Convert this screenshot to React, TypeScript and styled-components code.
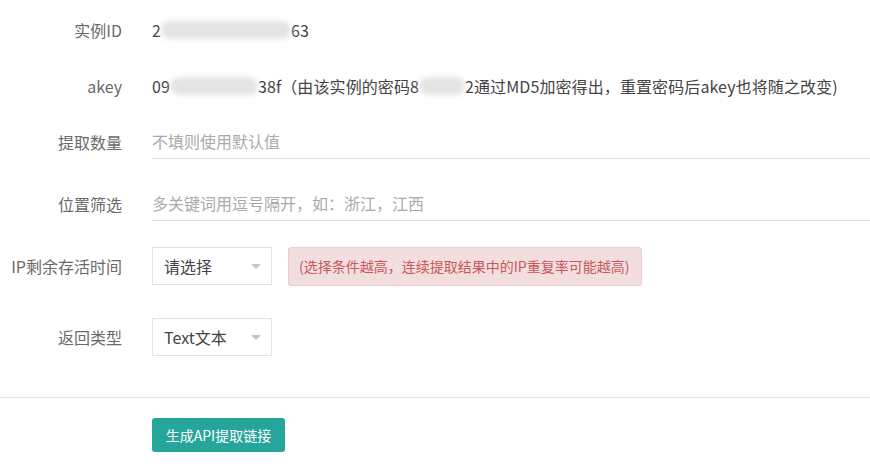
import styled, { createGlobalStyle } from "styled-components";

const GlobalStyle = createGlobalStyle`
  html, body {
    margin: 0;
    padding: 0;
    background: #fff;
  }
  body {
    font-family: "Noto Sans CJK SC", "Microsoft YaHei", sans-serif;
    color: #333;
  }
`;

const Page = styled.div`
  width: 870px;
  padding-top: 10px;
`;

const Form = styled.div`
  display: flex;
  flex-direction: column;
`;

const Row = styled.div<{ $mt?: number }>`
  display: flex;
  align-items: center;
  height: 40px;
  margin-top: ${(p) => p.$mt ?? 0}px;
`;

const Label = styled.div`
  width: 122px;
  flex-shrink: 0;
  text-align: right;
  font-size: 16px;
  color: #6a6a6a;
  margin-right: 30px;
  white-space: nowrap;
`;

const Value = styled.div`
  display: flex;
  align-items: center;
  font-size: 16px;
  color: #444;
  white-space: nowrap;
  letter-spacing: 0.1px;
`;

const Blur = styled.span<{ $w: number }>`
  display: inline-block;
  width: ${(p) => p.$w}px;
  height: 18px;
  background: #e4e4e4;
  border-radius: 9px;
  filter: blur(2.5px);
`;

const Input = styled.input`
  flex: 1;
  height: 34px;
  margin-top: -2px;
  border: none;
  border-bottom: 1px solid #e2e2e2;
  outline: none;
  padding: 0;
  font-family: inherit;
  font-size: 16px;
  color: #333;
  background: transparent;
  &::placeholder {
    color: #aaa;
  }
`;

const Select = styled.div`
  position: relative;
  box-sizing: border-box;
  width: 120px;
  height: 38px;
  border: 1px solid #e3e3e3;
  display: flex;
  align-items: center;
  padding-left: 11px;
  font-size: 16px;
  color: #444;
`;

const Caret = styled.span`
  position: absolute;
  right: 10px;
  top: 16px;
  width: 0;
  height: 0;
  border-left: 5px solid transparent;
  border-right: 5px solid transparent;
  border-top: 5px solid #c4c4c4;
`;

const Alert = styled.div`
  box-sizing: border-box;
  margin-left: 16px;
  height: 39px;
  padding: 0 12px 0 10px;
  display: flex;
  align-items: center;
  background: #f2dede;
  border: 1px solid #ebccd1;
  border-radius: 3px;
  color: #c9585a;
  font-size: 14px;
  white-space: nowrap;
`;

const Divider = styled.hr`
  margin: 40px 0 0;
  border: none;
  border-top: 1px solid #e5e5e5;
`;

const Footer = styled.div`
  padding: 20px 0 0 152px;
`;

const Button = styled.button`
  height: 34px;
  width: 133px;
  border: none;
  border-radius: 3px;
  background: #26a69a;
  color: #fff;
  font-family: inherit;
  font-size: 14px;
  padding: 0;
  cursor: pointer;
`;

export default function App() {
  return (
    <Page>
      <GlobalStyle />
      <Form>
        <Row>
          <Label>实例ID</Label>
          <Value>
            2<Blur $w={130} />63
          </Value>
        </Row>
        <Row $mt={16}>
          <Label>akey</Label>
          <Value>
            09<Blur $w={88} />38f（由该实例的密码8<Blur $w={46} />2通过MD5加密得出，重置密码后akey也将随之改变)
          </Value>
        </Row>
        <Row $mt={16}>
          <Label>提取数量</Label>
          <Input placeholder="不填则使用默认值" />
        </Row>
        <Row $mt={22}>
          <Label>位置筛选</Label>
          <Input placeholder="多关键词用逗号隔开，如：浙江，江西" />
        </Row>
        <Row $mt={22}>
          <Label>IP剩余存活时间</Label>
          <Select>
            请选择
            <Caret />
          </Select>
          <Alert>(选择条件越高，连续提取结果中的IP重复率可能越高)</Alert>
        </Row>
        <Row $mt={31}>
          <Label>返回类型</Label>
          <Select>
            Text文本
            <Caret />
          </Select>
        </Row>
      </Form>
      <Divider />
      <Footer>
        <Button>生成API提取链接</Button>
      </Footer>
    </Page>
  );
}
